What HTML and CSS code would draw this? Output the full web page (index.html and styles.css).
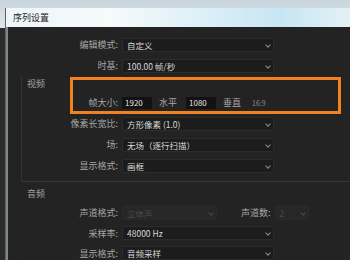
FILE: index.html
```html
<!DOCTYPE html>
<html lang="zh-CN">
<head>
    <meta charset="UTF-8">
    <meta name="viewport" content="width=device-width, initial-scale=1.0">
    <title>序列设置</title>
    <link rel="stylesheet" href="styles.css">
</head>
<body>
    <div class="screen">
        <div class="dialog">
            <div class="titlebar">序列设置</div>
            <div class="panel">
                <div class="row top-row">
                    <span class="lbl">编辑模式:</span>
                    <div class="select">自定义<span class="chev"></span></div>
                </div>
                <div class="row top-row">
                    <span class="lbl">时基:</span>
                    <div class="select">100.00 帧/秒<span class="chev"></span></div>
                </div>

                <div class="group video">
                    <div class="group-title">视频</div>
                    <div class="row">
                        <span class="lbl">帧大小:</span>
                        <div class="num">1920</div>
                        <span class="unit">水平</span>
                        <div class="num">1080</div>
                        <span class="unit">垂直</span>
                        <span class="ratio">16:9</span>
                    </div>
                    <div class="row">
                        <span class="lbl">像素长宽比:</span>
                        <div class="select">方形像素 (1.0)<span class="chev"></span></div>
                    </div>
                    <div class="row">
                        <span class="lbl">场:</span>
                        <div class="select">无场（逐行扫描）<span class="chev"></span></div>
                    </div>
                    <div class="row">
                        <span class="lbl">显示格式:</span>
                        <div class="select">画框<span class="chev"></span></div>
                    </div>
                </div>

                <div class="group audio">
                    <div class="group-title">音频</div>
                    <div class="row">
                        <span class="lbl">声道格式:</span>
                        <div class="select disabled wide">立体声<span class="chev"></span></div>
                        <span class="lbl-inline">声道数:</span>
                        <div class="select disabled narrow">2<span class="chev"></span></div>
                    </div>
                    <div class="row short">
                        <span class="lbl">采样率:</span>
                        <div class="select">48000 Hz<span class="chev"></span></div>
                    </div>
                    <div class="row short">
                        <span class="lbl">显示格式:</span>
                        <div class="select">音频采样<span class="chev"></span></div>
                    </div>
                </div>
            </div>
        </div>
        <!-- 标注框 -->
        <div class="highlight"></div>
    </div>
</body>
</html>
```

FILE: styles.css
```css
body {
    margin: 0;
    padding: 0;
    font-family: "Noto Sans CJK SC", "Liberation Sans", sans-serif;
    background-color: #232323;
}
.screen {
    position: relative;
    width: 350px;
    height: 260px;
    overflow: hidden;
    display: flex;
    background: linear-gradient(to bottom, #c9d5dd 0, #dde5ea 28px, #2b2b2b 28px);
}
.dialog {
    flex: 1;
    margin: 8px 0 0 5px;
    display: flex;
    flex-direction: column;
    border-left: 1px solid #5b6165;
}
.titlebar {
    height: 19px;
    line-height: 19px;
    padding-left: 5px;
    font-size: 9px;
    color: #1b1b1b;
    border-left: 2px solid #eef3f5;
    background: linear-gradient(to right, #eef6f9 0%, #f6fafb 30%, #d9eef7 60%, #c7e6f3 80%, #e3f1f6 100%);
}
.panel {
    flex: 1;
    background-color: #232323;
    border-left: 2px solid #7e868b;
    padding-top: 7px;
    --lbl-w: 110px;
}
.row {
    display: flex;
    align-items: center;
    height: 21px;
    gap: 4px;
}
.row.short {
    height: 20px;
}
.lbl {
    width: var(--lbl-w);
    flex: none;
    text-align: right;
    font-size: 9px;
    color: #a6a6a6;
    white-space: nowrap;
}
.select {
    position: relative;
    box-sizing: border-box;
    width: 152px;
    height: 14px;
    line-height: 12px;
    padding-left: 4px;
    font-size: 8.5px;
    color: #d8d8d8;
    background-color: #1c1c1c;
    border: 1px solid #2c2c2c;
    border-radius: 2px;
    white-space: nowrap;
}
.chev {
    position: absolute;
    right: 3px;
    top: 4px;
    width: 3px;
    height: 3px;
    border-right: 1px solid #8c8c8c;
    border-bottom: 1px solid #8c8c8c;
    transform: rotate(45deg);
}
.select.disabled {
    color: #4a4a4a;
    background-color: #272727;
    border-color: #2a2a2a;
}
.select.disabled .chev {
    border-color: #484848;
}
.select.wide {
    width: 95px;
}
.select.narrow {
    width: 34px;
}
.lbl-inline {
    margin-left: 20px;
    font-size: 9px;
    color: #a6a6a6;
    white-space: nowrap;
}
.group {
    margin-left: 13px;
    border-left: 1px solid #333333;
    --lbl-w: 96px;
}
.group.video {
    border-bottom: 1px solid #363636;
    padding-bottom: 5px;
}
.group-title {
    height: 16px;
    line-height: 16px;
    padding-left: 5px;
    font-size: 9px;
    color: #a0a0a0;
}
.group.audio {
    margin-top: 4px;
    border-left-color: #262626;
}
.num {
    box-sizing: border-box;
    width: 30px;
    height: 12px;
    line-height: 12px;
    padding-left: 3px;
    font-size: 8px;
    color: #e4e4e4;
    background-color: #121212;
}
.unit {
    margin: 0 5px 0 3px;
    font-size: 9px;
    color: #a6a6a6;
}
.ratio {
    margin-left: 2px;
    font-size: 7px;
    color: #8a8a8a;
}
.highlight {
    position: absolute;
    left: 70px;
    top: 77px;
    width: 271px;
    height: 37px;
    box-sizing: border-box;
    border: 3px solid #f3811f;
}
```
